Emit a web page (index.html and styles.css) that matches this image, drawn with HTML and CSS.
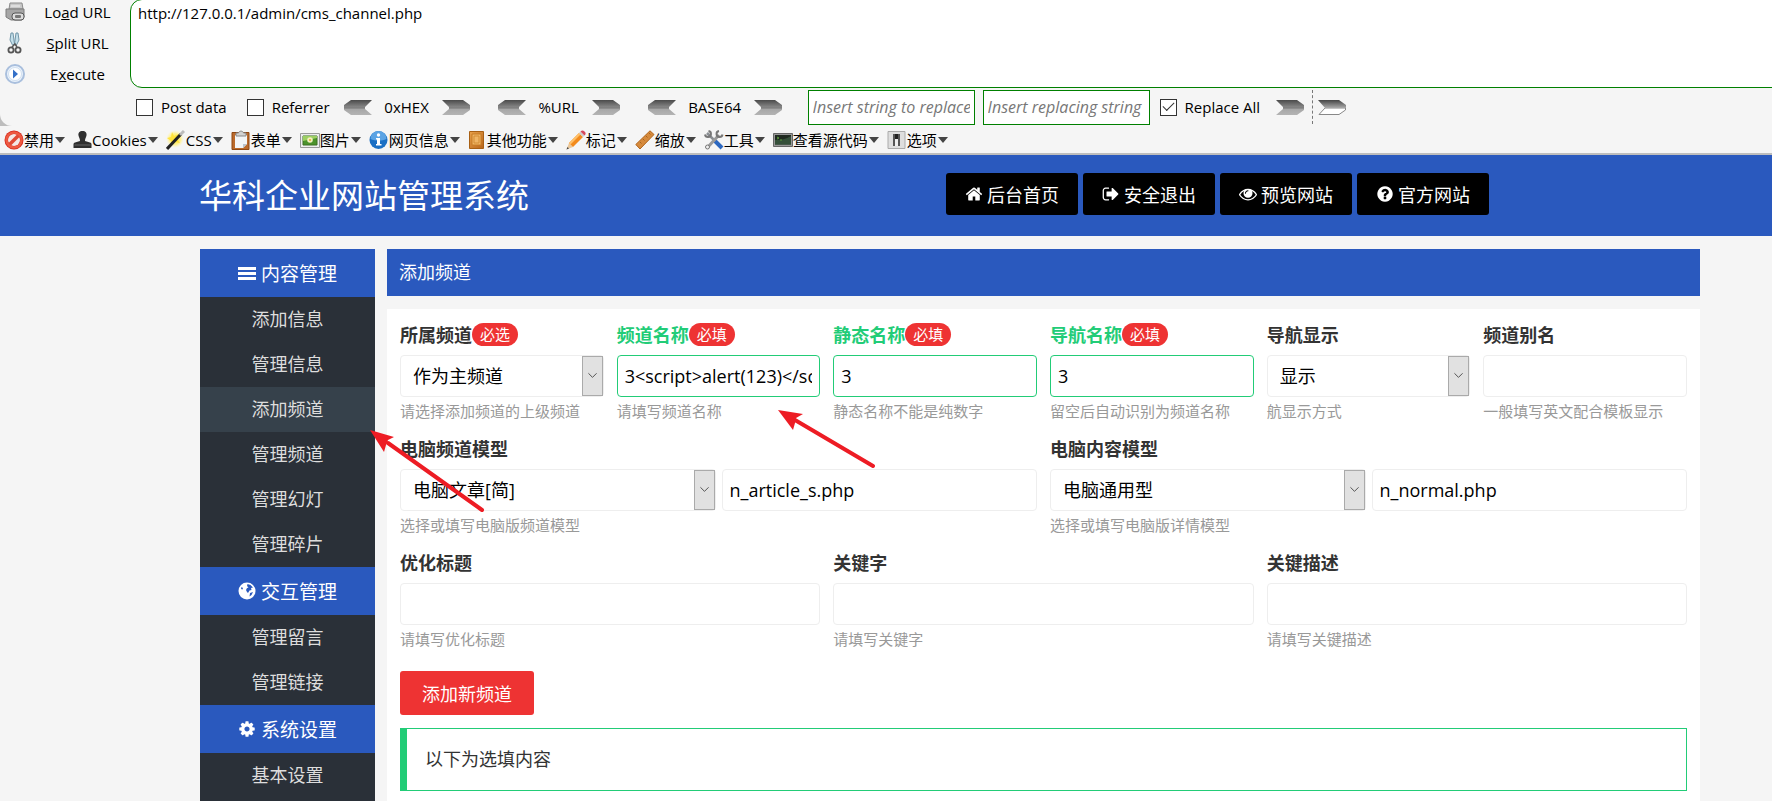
FILE: index.html
```html
<!DOCTYPE html>
<html lang="zh-CN">
<head>
<meta charset="utf-8">
<title>华科企业网站管理系统</title>
<link rel="stylesheet" href="styles.css">
</head>
<body>
<svg class="defs" aria-hidden="true">
  <defs>
    <linearGradient id="steel" x1="0" y1="0" x2="0" y2="1"><stop offset="0" stop-color="#4a4a4a"/><stop offset=".5" stop-color="#8a8a8a"/><stop offset=".55" stop-color="#a4a4a4"/><stop offset="1" stop-color="#b4b4b4"/></linearGradient>
    <linearGradient id="steel-top" x1="0" y1="0" x2="0" y2="1"><stop offset="0" stop-color="#444"/><stop offset="1" stop-color="#aaa"/></linearGradient>
    <linearGradient id="wood" x1="0" y1="0" x2="1" y2="1"><stop offset="0" stop-color="#e9a24c"/><stop offset="1" stop-color="#b8651a"/></linearGradient>
    <radialGradient id="glow"><stop offset="0" stop-color="#ffe94a"/><stop offset=".6" stop-color="#fff08a"/><stop offset="1" stop-color="#fff6c0" stop-opacity="0"/></radialGradient>
    <symbol id="arrow-right" viewBox="0 0 28 15"><path fill="url(#steel)" d="M0 0h21l7 5v5l-7 5H0l7-6V7z"/><path d="M7 8h21" stroke="#777" stroke-width="1"/></symbol>
    <symbol id="arrow-left" viewBox="0 0 28 15"><path fill="url(#steel)" d="M28 0H7L0 5v5l7 5h21l-7-6V7z"/><path d="M21 8H0" stroke="#777" stroke-width="1"/></symbol>
  </defs>
</svg>

<div class="chrome">
<section class="hackbar">
  <div class="hackbar-top">
    <div class="actions">
      <button class="action" type="button">
        <svg width="20" height="20" viewBox="0 0 20 20"><path fill="#c9c9c9" stroke="#8b8b8b" d="M5 1h12l1 6H4z"/><path fill="#a6a6a6" stroke="#7d7d7d" d="M1 7h18v8l-2 3H6l-5-3z"/><path fill="#ddd" d="M6 3h9v2H6z"/><rect x="7" y="11" width="12" height="7" rx="3" fill="#ddd" stroke="#555"/><rect x="10" y="13" width="6" height="3" rx="1" fill="#777"/></svg>
        <span class="action-text">Lo<u>a</u>d URL</span>
      </button>
      <button class="action" type="button">
        <svg width="20" height="22" viewBox="0 0 20 22"><path fill="#c4dfea" stroke="#7296a8" d="M6 1l2 0 1.500 11-2 1L5 8zM13 1h-2L9.500 12l2 1L14 8z"/><circle cx="6" cy="18" r="2.600" fill="none" stroke="#555" stroke-width="1.800"/><circle cx="13" cy="18" r="2.600" fill="none" stroke="#555" stroke-width="1.800"/><path d="M7 15l3-3 2 3" fill="none" stroke="#555" stroke-width="1.500"/></svg>
        <span class="action-text"><u>S</u>plit URL</span>
      </button>
      <button class="action" type="button">
        <svg width="20" height="20" viewBox="0 0 20 20"><circle cx="10" cy="10" r="9" fill="#eaf2fb" stroke="#a9bfdd" stroke-width="2"/><circle cx="10" cy="10" r="6.500" fill="#fff" stroke="#d0dff0"/><path fill="#3470c8" d="M8 5.500l5 4.500-5 4.500z"/></svg>
        <span class="action-text">E<u>x</u>ecute</span>
      </button>
    </div>
    <textarea class="url-box" aria-label="URL" spellcheck="false">http://127.0.0.1/admin/cms_channel.php</textarea>
  </div>
  <div class="hackbar-row">
    <label class="check"><input type="checkbox">Post data</label>
    <label class="check check-last"><input type="checkbox">Referrer</label>
    <div class="codec"><button type="button" aria-label="0xHEX decode"><svg width="28" height="15"><use href="#arrow-left"/></svg></button><span>0xHEX</span><button type="button" aria-label="0xHEX encode"><svg width="28" height="15"><use href="#arrow-right"/></svg></button></div>
    <div class="codec"><button type="button" aria-label="URL decode"><svg width="28" height="15"><use href="#arrow-left"/></svg></button><span>%URL</span><button type="button" aria-label="URL encode"><svg width="28" height="15"><use href="#arrow-right"/></svg></button></div>
    <div class="codec"><button type="button" aria-label="BASE64 decode"><svg width="28" height="15"><use href="#arrow-left"/></svg></button><span>BASE64</span><button type="button" aria-label="BASE64 encode"><svg width="28" height="15"><use href="#arrow-right"/></svg></button></div>
    <div class="replace">
      <input class="replace-box" type="text" placeholder="Insert string to replace" aria-label="Insert string to replace">
      <input class="replace-box" type="text" placeholder="Insert replacing string" aria-label="Insert replacing string">
      <label class="check"><input type="checkbox" checked>Replace All</label>
      <button class="go" type="button" aria-label="Replace"><svg width="28" height="15"><use href="#arrow-right"/></svg></button>
      <button class="go go-last" type="button" aria-label="Replace next"><svg width="28" height="15" viewBox="0 0 28 15"><path fill="#fff" stroke="#888" d="M7 8h20.500v2L21 14.500H1z"/><path fill="url(#steel-top)" d="M0 0h21l7 5v3H7z"/></svg></button>
    </div>
  </div>
</section>
</div>

<nav class="devbar">
  <button type="button"><svg width="20" height="20" viewBox="0 0 20 20"><circle cx="10" cy="10" r="9.500" fill="#d5281a"/><circle cx="10" cy="10" r="6" fill="#f4e9e7"/><path d="M5 15L15 5" stroke="#e04a35" stroke-width="3.500"/><circle cx="10" cy="10" r="7.500" fill="none" stroke="#ee5a42" stroke-width="2.500"/></svg>禁用<i class="caret"></i></button>
  <button type="button"><svg width="19" height="20" viewBox="0 0 18 20"><path fill="#2f2f2f" d="M9 1c3 0 4.500 2 4 4.500-.3 2-1.500 3-1.500 5.500l5 1.500c1 .4 1.500 1 1.500 2V18H0v-3.500c0-1 .5-1.600 1.500-2l5-1.500c0-2.500-1.200-3.500-1.500-5.500C4.500 3 6 1 9 1z"/><path fill="#666" d="M1 14.500h16v1H1z"/></svg>Cookies<i class="caret"></i></button>
  <button type="button"><svg width="20" height="20" viewBox="0 0 20 20"><circle cx="9" cy="9" r="9" fill="url(#glow)"/><path fill="#ffe23a" d="M6 2l2 4 5-2-2 5 3 4-5-1-4 4v-5L1 8l4-1z"/><path d="M1 19L15 4" stroke="#222" stroke-width="3"/><path d="M14 5l4-4" stroke="#bbb" stroke-width="3"/></svg>CSS<i class="caret"></i></button>
  <button type="button"><svg width="20" height="20" viewBox="0 0 20 20"><path fill="#bb6a2c" stroke="#8d4714" d="M1 2.500h17v17H1z"/><path fill="#f2f5f8" d="M4 5h12v9l-4 4H4z"/><path fill="#b9c4cf" d="M16 14h-4v4z"/><path fill="#d2d2d2" stroke="#888" d="M5 3h2.500C8 .5 12 .5 12.500 3H15v3H5z"/></svg>表单<i class="caret"></i></button>
  <button type="button"><svg width="20" height="20" viewBox="0 0 20 20"><path fill="#eee" stroke="#999" d="M.5 3.500h19v14H.5z"/><path fill="#4c932b" stroke="#3c6f24" d="M3 6h14v9H3z"/><path fill="#9ccf62" d="M3 6h14v2l-14 3z"/><circle cx="10" cy="10" r="2.800" fill="#f3efc0"/><circle cx="10" cy="10" r="1" fill="#e3b21f"/></svg>图片<i class="caret"></i></button>
  <button type="button"><svg width="20" height="20" viewBox="0 0 20 20"><circle cx="9.500" cy="10" r="9" fill="#1a6fc4"/><path fill="#5ba3e4" d="M1.500 9a8 8 0 0116 0c-5 2-11 2-16 0z"/><circle cx="9.500" cy="5" r="1.700" fill="#fff"/><path fill="#fff" d="M7 8h4v6h1.500v1.500H7V14h1V9.500H7z"/></svg>网页信息<i class="caret"></i></button>
  <button type="button"><svg width="19" height="20" viewBox="0 0 19 20"><path fill="url(#wood)" stroke="#a86014" d="M1.500 1.500h14v17h-14z"/><path fill="#efb566" stroke="#c77c25" d="M4 4h9v11H4z"/><path d="M6 6h5v7H6z" fill="none" stroke="#d38d35"/></svg>其他功能<i class="caret"></i></button>
  <button type="button"><svg width="20" height="20" viewBox="0 0 20 20"><path fill="#e9c79b" d="M3 13l4 4-6.500 2.500z"/><path fill="#444" d="M.5 19.500L1.500 17l1.500 1.500z"/><path fill="#f28a1c" d="M3 13L13 3l4 4L7 17z"/><path fill="#ffc069" d="M3 13L13 3l1.500 1.500-10 10z"/><path fill="#ccc" d="M13 3l1.500-1.500 4 4L17 7z"/><path fill="#d6475a" d="M14.500 1.500C16 0 17 0 18.500 1.500s1.500 2.500 0 4z"/></svg>标记<i class="caret"></i></button>
  <button type="button"><svg width="20" height="20" viewBox="0 0 20 20"><path fill="#d68a3c" stroke="#b0651c" d="M.8 14.500L15 .8 19 4.500 5 19z"/><path d="M5 12l1.500 1.500M8 9l1.500 1.500M11 6l1.500 1.500M14 3l1.500 1.500" stroke="#a8641e"/></svg>缩放<i class="caret"></i></button>
  <button type="button"><svg width="20" height="20" viewBox="0 0 20 20"><path d="M3 3l10 10" stroke="#8b8f94" stroke-width="2.500"/><path d="M11 11l7 7" stroke="#2d68c0" stroke-width="4"/><path d="M3 18L15 5" stroke="#9a9a9a" stroke-width="3"/><path d="M18.500 4.500a3 3 0 11-3.500-3.500" fill="none" stroke="#777" stroke-width="2"/><path d="M1 4.500A3 3 0 104.500 1" fill="none" stroke="#777" stroke-width="2"/><circle cx="3.500" cy="17" r="2" fill="#eee" stroke="#777"/></svg>工具<i class="caret"></i></button>
  <button type="button"><svg width="20" height="20" viewBox="0 0 20 20"><path fill="#999" stroke="#666" d="M.5 3.500h19v13H.5z"/><path fill="#1f2a20" d="M2 5h16v9.500H2z"/><path fill="#35503a" d="M2 10c6 0 11-1 16-4v8.500H2z"/><path d="M4 7l2 1-2 1M7 10h2" fill="none" stroke="#5a9a3a"/></svg>查看源代码<i class="caret"></i></button>
  <button type="button"><svg width="20" height="20" viewBox="0 0 20 20"><path fill="#dedede" stroke="#aaa" d="M1 1.500h17v17H1z"/><path fill="#555" d="M6 4h7v12H6z"/><path fill="#222" d="M8 4h3v5H8z"/><path fill="#eee" d="M8 9h3v7H8z"/></svg>选项<i class="caret"></i></button>
</nav>

<header class="site-header">
  <h1 class="site-title">华科企业网站管理系统</h1>
  <nav class="top-nav">
    <a href="#"><svg class="fa" viewBox="0 0 1792 1792"><path d="M1472 992v480q0 26-19 45t-45 19h-384v-384h-256v384h-384q-26 0-45-19t-19-45v-480q0-1 .5-3t.5-3l575-474 575 474q1 2 1 6zm223-69l-62 74q-8 9-21 11h-3q-13 0-21-7l-692-577-692 577q-12 8-24 7-13-2-21-11l-62-74q-8-10-7-23.500t11-21.500l719-599q32-26 76-26t76 26l244 204v-195q0-14 9-23t23-9h192q14 0 23 9t9 23v408l219 182q10 8 11 21.500t-7 23.500z"/></svg>后台首页</a>
    <a href="#"><svg class="fa" viewBox="0 0 1792 1792"><path d="M704 1440q0 4 1 20t.5 26.500-3 23.500-10 19.500-20.500 6.500h-320q-119 0-203.500-84.500t-84.500-203.500v-704q0-119 84.500-203.500t203.500-84.500h320q13 0 22.500 9.500t9.500 22.500q0 4 1 20t.5 26.500-3 23.500-10 19.500-20.500 6.500h-320q-66 0-113 47t-47 113v704q0 66 47 113t113 47h312l11.500 1 11.500 3 8 5.500 7 9 2 13.500zm928-544q0 26-19 45l-544 544q-19 19-45 19t-45-19-19-45v-288h-448q-26 0-45-19t-19-45v-384q0-26 19-45t45-19h448v-288q0-26 19-45t45-19 45 19l544 544q19 19 19 45z"/></svg>安全退出</a>
    <a href="#"><svg class="fa" viewBox="0 0 1792 1792"><path d="M1664 960q-152-236-381-353 61 104 61 225 0 185-131.500 316.500t-316.500 131.500-316.500-131.500-131.500-316.500q0-121 61-225-229 117-381 353 133 205 333.500 326.500t434.500 121.500 434.500-121.500 333.500-326.500zm-720-384q0-20-14-34t-34-14q-125 0-214.500 89.500t-89.500 214.500q0 20 14 34t34 14 34-14 14-34q0-86 61-147t147-61q20 0 34-14t14-34zm848 384q0 34-20 69-140 230-376.500 368.500t-499.500 138.500-499.500-139-376.500-368q-20-35-20-69t20-69q140-229 376.500-368t499.500-139 499.500 139 376.500 368q20 35 20 69z"/></svg>预览网站</a>
    <a href="#"><svg class="fa" viewBox="0 0 1792 1792"><path d="M1024 1376v-192q0-14-9-23t-23-9h-192q-14 0-23 9t-9 23v192q0 14 9 23t23 9h192q14 0 23-9t9-23zm256-672q0-88-55.500-163t-138.500-116-170-41q-243 0-371 213-15 24 8 42l132 100q7 6 19 6 16 0 25-12 53-68 86-92 34-24 86-24 48 0 85.500 26t37.500 59q0 38-20 61t-68 45q-63 28-115.500 86.500t-52.500 125.500v36q0 14 9 23t23 9h192q14 0 23-9t9-23q0-19 21.500-49.500t54.500-49.500q32-18 49-28.500t46-35 44.500-48 28-60.500 12.500-81zm384 192q0 209-103 385.500t-279.500 279.500-385.500 103-385.500-103-279.500-279.500-103-385.500 103-385.500 279.500-279.500 385.500-103 385.500 103 279.500 279.500 103 385.500z"/></svg>官方网站</a>
  </nav>
</header>

<div class="layout">
  <aside class="sidebar">
    <h2 class="side-head"><svg class="fa" viewBox="0 0 18 18"><path d="M0 3h18v3H0zM0 8h18v3H0zM0 13h18v3H0z"/></svg>内容管理</h2>
    <a href="#">添加信息</a>
    <a href="#">管理信息</a>
    <a href="#" class="active">添加频道</a>
    <a href="#">管理频道</a>
    <a href="#">管理幻灯</a>
    <a href="#">管理碎片</a>
    <h2 class="side-head"><svg class="fa" viewBox="0 0 18 18"><circle cx="9" cy="9" r="8.500"/><path fill="#2a59be" d="M9.500 2l3 1 2.500 2.500-2 .5.500 2-2 .5-1.500 2.500-1-1-1-2 1-2 1.500-.5-1.500-1.500zM12 11l3-1-1.500 3-2 1.500zM3.500 5l1.500 1-.5 1.500-1.500-.5z"/></svg>交互管理</h2>
    <a href="#">管理留言</a>
    <a href="#">管理链接</a>
    <h2 class="side-head"><svg class="fa" viewBox="0 0 1792 1792"><path d="M1152 896q0-106-75-181t-181-75-181 75-75 181 75 181 181 75 181-75 75-181zm512-109v222q0 12-8 23t-20 13l-185 28q-19 54-39 91 35 50 107 138 10 12 10 25t-9 23q-27 37-99 108t-94 71q-12 0-26-9l-138-108q-44 23-91 38-16 136-29 186-7 28-36 28h-222q-14 0-24.500-8.500t-11.500-21.500l-28-184q-49-16-90-37l-141 107q-10 9-25 9-14 0-25-11-126-114-165-168-7-10-7-23 0-12 8-23 15-21 51-66.500t54-70.500q-27-50-41-99l-183-27q-13-2-21-12.500t-8-23.500v-222q0-12 8-23t19-13l186-28q14-46 39-92-40-57-107-138-10-12-10-24 0-10 9-23 26-36 98.500-107.500t94.500-71.500q13 0 26 10l138 107q44-23 91-38 16-136 29-186 7-28 36-28h222q14 0 24.500 8.500t11.500 21.500l28 184q49 16 90 37l142-107q9-9 24-9 13 0 25 10 129 119 165 170 7 8 7 22 0 12-8 23-15 21-51 66.500t-54 70.500q26 50 41 98l183 28q13 2 21 12.500t8 23.500z"/></svg>系统设置</h2>
    <a href="#">基本设置</a>
  </aside>

  <main class="content">
    <h2 class="page-head">添加频道</h2>
    <form class="panel">
      <div class="row row-six">
        <div class="field">
          <label for="parent">所属频道<span class="badge">必选</span></label>
          <span class="select"><select id="parent"><option>作为主频道</option></select><svg class="drop" viewBox="0 0 21 40"><path d="M6 17l4.500 4.500L15 17"/></svg></span>
          <p class="help">请选择添加频道的上级频道</p>
        </div>
        <div class="field ok">
          <label for="name">频道名称<span class="badge">必填</span></label>
          <input id="name" type="text" value="3&lt;script&gt;alert(123)&lt;/script&gt;">
          <p class="help">请填写频道名称</p>
        </div>
        <div class="field ok">
          <label for="static">静态名称<span class="badge">必填</span></label>
          <input id="static" type="text" value="3">
          <p class="help">静态名称不能是纯数字</p>
        </div>
        <div class="field ok">
          <label for="navname">导航名称<span class="badge">必填</span></label>
          <input id="navname" type="text" value="3">
          <p class="help">留空后自动识别为频道名称</p>
        </div>
        <div class="field">
          <label for="navshow">导航显示</label>
          <span class="select"><select id="navshow"><option>显示</option></select><svg class="drop" viewBox="0 0 21 40"><path d="M6 17l4.500 4.500L15 17"/></svg></span>
          <p class="help">航显示方式</p>
        </div>
        <div class="field">
          <label for="alias">频道别名</label>
          <input id="alias" type="text">
          <p class="help">一般填写英文配合模板显示</p>
        </div>
      </div>
      <div class="row row-two">
        <div class="field">
          <label for="cmodel">电脑频道模型</label>
          <div class="pair">
            <span class="select"><select id="cmodel"><option>电脑文章[简]</option></select><svg class="drop" viewBox="0 0 21 40"><path d="M6 17l4.500 4.500L15 17"/></svg></span>
            <input type="text" value="n_article_s.php" aria-label="电脑频道模型文件">
          </div>
          <p class="help">选择或填写电脑版频道模型</p>
        </div>
        <div class="field">
          <label for="dmodel">电脑内容模型</label>
          <div class="pair">
            <span class="select"><select id="dmodel"><option>电脑通用型</option></select><svg class="drop" viewBox="0 0 21 40"><path d="M6 17l4.500 4.500L15 17"/></svg></span>
            <input type="text" value="n_normal.php" aria-label="电脑内容模型文件">
          </div>
          <p class="help">选择或填写电脑版详情模型</p>
        </div>
      </div>
      <div class="row row-three">
        <div class="field">
          <label for="seotitle">优化标题</label>
          <input id="seotitle" type="text">
          <p class="help">请填写优化标题</p>
        </div>
        <div class="field">
          <label for="keywords">关键字</label>
          <input id="keywords" type="text">
          <p class="help">请填写关键字</p>
        </div>
        <div class="field">
          <label for="desc">关键描述</label>
          <input id="desc" type="text">
          <p class="help">请填写关键描述</p>
        </div>
      </div>
      <button class="submit" type="button">添加新频道</button>
      <div class="notice">以下为选填内容</div>
    </form>
  </main>
</div>

<svg class="pointers" width="520" height="120" viewBox="365 400 520 120" aria-hidden="true">
  <path class="shaft" d="M388 443L482 510M795 420L873 466"/>
  <path d="M370 430L394 437L388 440L386 445L384 452ZM778 410L803 414L796 418L795 423L793 430Z"/>
</svg>
</body>
</html>
```

FILE: styles.css
```css
* { box-sizing: border-box; }

html { height: 100%; overflow: hidden; }

body {
  margin: 0;
  height: 100vh;
  overflow: hidden;
  position: relative;
  display: flex;
  flex-direction: column;
  background: #f5f5f5;
  color: #333;
  font-family: "Open Sans", "Noto Sans CJK SC", sans-serif;
  font-size: 18px;
}

button, input, select, textarea { font: inherit; color: #000; }
button { border: 0; padding: 0; background: none; }
a { color: inherit; text-decoration: none; }
h1, h2, p { margin: 0; font-weight: 400; }
svg { flex: none; }

.defs { position: absolute; width: 0; height: 0; }

/* URL tool */
.chrome { flex: none; background: #bdbdbd; }
.hackbar {
  border-radius: 0 0 0 12px;
  background: #f5f5f5;
  color: #000;
  font-size: 15px;
}
.hackbar-top { display: flex; height: 88px; }
.actions { width: 130px; flex: none; display: flex; flex-direction: column; padding-left: 5px; }
.action { flex: none; height: 31px; display: flex; align-items: center; padding-bottom: 8px; }
.action-text { flex: 1; text-align: center; }
.url-box {
  flex: 1;
  margin: -1px -12px 0 0;
  padding: 3px 7px;
  border: 1px solid #008000;
  border-radius: 12px;
  background: #fff;
  line-height: 20px;
  resize: none;
  outline: 0;
  overflow: hidden;
}
.hackbar-row { display: flex; align-items: center; height: 38px; padding: 2px 0 2px 136px; }
.check { display: flex; align-items: center; gap: 8px; margin-right: 20px; white-space: nowrap; }
.check-last { margin-right: 14px; }
.check input {
  appearance: none;
  width: 17px;
  height: 17px;
  margin: 0;
  border: 1px solid #333;
  background: #fff;
  display: grid;
  place-items: center;
}
.check input:checked::after {
  content: "";
  width: 10px;
  height: 5px;
  margin-bottom: 4px;
  border: solid #333;
  border-width: 0 0 1px 1px;
  transform: rotate(-45deg);
}
.codec { display: flex; align-items: center; justify-content: space-between; width: 126px; margin-right: 28px; }
.codec:nth-of-type(2) { width: 122px; }
.codec:nth-of-type(3) { width: 134px; margin-right: 26px; }
.codec button, .go { display: flex; }
.replace { display: flex; align-items: center; gap: 8px; }
.replace-box {
  width: 167px;
  height: 35px;
  padding: 0 4px;
  border: 1px solid #008000;
  background: #fff;
  font-size: 16px;
  font-style: italic;
}
.replace-box::placeholder { color: #777; opacity: 1; }
.replace .check { margin: 0 8px 0 2px; }
.go-last { height: 34px; align-items: center; padding-left: 5px; border-left: 1px dashed #777; }

/* Developer toolbar */
.devbar {
  flex: none;
  display: flex;
  gap: 8px;
  height: 29px;
  padding: 0 4px;
  border-bottom: 2px solid #bdbdbd;
  font-size: 15px;
}
.devbar button { display: flex; align-items: center; line-height: 24px; white-space: nowrap; }
.caret { margin-left: 1px; border: solid transparent; border-width: 6px 5px 0; border-top-color: #444; }

/* Site header */
.site-header {
  flex: none;
  display: flex;
  justify-content: space-between;
  align-items: flex-start;
  padding: 18px 283px 19px 199px;
  background: #2a59be;
  color: #fff;
}
.site-title { font-size: 33px; line-height: 42px; padding-top: 2px; }
.top-nav { display: flex; gap: 5px; }
.top-nav a {
  display: flex;
  align-items: center;
  gap: 4px;
  height: 42px;
  padding: 0 19px;
  border-radius: 3px;
  background: #000;
}
.top-nav .fa { width: 18px; height: 18px; }
.fa { fill: #fff; }

/* Page frame */
.layout { flex: 1; display: flex; gap: 12px; padding: 13px 72px 0 200px; min-height: 0; }
.sidebar { width: 175px; flex: none; background: #2a3038; color: #ddd; text-align: center; }
.side-head {
  display: flex;
  align-items: center;
  justify-content: center;
  gap: 5px;
  height: 48px;
  background: #2a59be;
  color: #fff;
  font-size: 19px;
}
.side-head .fa { width: 18px; height: 18px; }
.sidebar a { display: block; line-height: 45px; }
.sidebar .active { background: #36414b; }

.content { flex: 1; min-width: 0; display: flex; flex-direction: column; gap: 13px; }
.page-head { padding: 0 12px; line-height: 47px; background: #2a59be; color: #fff; font-size: 18px; }
.panel { flex: 1; padding: 13px; background: #fff; }

/* Form */
.row { display: grid; gap: 13px; margin-bottom: 11px; }
.row-six { grid-template-columns: repeat(6, minmax(0, 1fr)); }
.row-two { grid-template-columns: repeat(2, minmax(0, 1fr)); }
.row-three { grid-template-columns: repeat(3, minmax(0, 1fr)); }
.field { display: flex; flex-direction: column; }
.field label {
  display: flex;
  align-items: center;
  height: 24px;
  margin-bottom: 9px;
  font-weight: 700;
}
.badge {
  padding: 0 8px;
  border-radius: 12px;
  background: #e33;
  color: #fff;
  font-size: 15px;
  line-height: 23px;
  font-weight: 400;
}
.field input, .field select {
  width: 100%;
  height: 42px;
  border: 1px solid #eee;
  border-radius: 4px;
  background: #fff;
}
.field input { padding: 0 7px; }
.field select { appearance: none; padding: 0 24px 0 12px; }
.select { position: relative; display: block; width: 100%; }
.drop {
  position: absolute;
  top: 1px;
  right: 1px;
  width: 21px;
  height: 40px;
  border: 1px solid #aaa;
  background: #e1e1e1;
  fill: none;
  stroke: #444;
  pointer-events: none;
}
.ok label { color: #2c7; }
.ok input { border-color: #2c7; }
.help { color: #999; font-size: 15px; line-height: 28px; white-space: nowrap; }
.pair { display: grid; grid-template-columns: 1fr 1fr; gap: 6px; }
.submit {
  display: block;
  height: 44px;
  margin: 18px 0 13px;
  padding: 0 22px;
  border-radius: 3px;
  background: #e33;
  color: #fff;
}
.notice { padding: 0 18px; border: 1px solid #2c7; border-left-width: 7px; line-height: 61px; }

/* Red pointers laid over the page */
.pointers { position: absolute; left: 365px; top: 400px; fill: #ed1c24; pointer-events: none; }
.shaft { stroke: #ed1c24; stroke-width: 4; stroke-linecap: round; }
```
